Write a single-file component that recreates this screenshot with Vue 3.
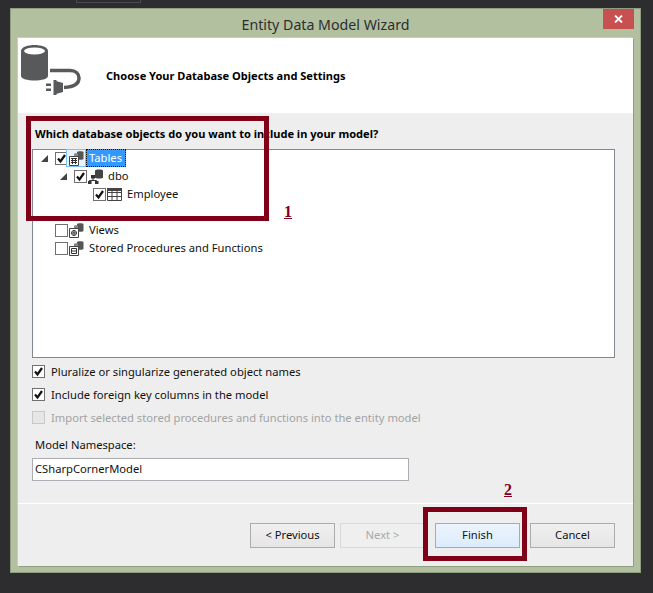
<script setup>
const nodes = [
  { label: 'Tables', level: 0, arrow: true, checked: true, icon: 'tables', selected: true },
  { label: 'dbo', level: 1, arrow: true, checked: true, icon: 'schema' },
  { label: 'Employee', level: 2, checked: true, icon: 'table' },
  { spacer: true, level: 0 },
  { label: 'Views', level: 0, checked: false, icon: 'views' },
  { label: 'Stored Procedures and Functions', level: 0, checked: false, icon: 'procs' }
]
const options = [
  { label: 'Pluralize or singularize generated object names', checked: true },
  { label: 'Include foreign key columns in the model', checked: true },
  { label: 'Import selected stored procedures and functions into the entity model', disabled: true }
]
</script>

<template>
  <div class="screen">
    <div class="chrome-tab"></div>
    <div class="window">
      <div class="titlebar">
        <span class="title">Entity Data Model Wizard</span>
        <div class="close">
          <svg width="9" height="8" viewBox="0 0 9 8"><path d="M1 0.500L8 7.500M8 0.500L1 7.500" stroke="#fff" stroke-width="1.800" fill="none"/></svg>
        </div>
      </div>
      <div class="content">
        <header class="header">
          <svg class="logo" width="62" height="52" viewBox="0 0 62 52">
            <path d="M1 6c0-4 7-6 13.500-6S28 2 28 6v25c0 3-7 4.500-13.500 4.500S1 34 1 31z" fill="#58595b"/>
            <ellipse cx="14.500" cy="6" rx="10.500" ry="3.500" fill="#fff"/>
            <path d="M30 25.500H50C56 25.500 59 29 59 33C59 39 53 42 44 42.500" fill="none" stroke="#58595b" stroke-width="3.500"/>
            <path d="M33.500 35h3v15h-3z M36 36L43 38v9L36 49z" fill="#58595b"/>
            <path d="M26 38.500h5V41h-5z M26 43.500h5V46h-5z" fill="#58595b"/>
          </svg>
          <h1 class="heading">Choose Your Database Objects and Settings</h1>
        </header>
        <main class="body">
          <p class="question">Which database objects do you want to include in your model?</p>
          <div class="tree">
            <div class="tree-rows">
              <div v-for="(n, i) in nodes" :key="i" class="tree-row" :class="'lvl' + n.level">
                <template v-if="!n.spacer">
                  <span class="arrow"><svg v-if="n.arrow" width="7" height="7" viewBox="0 0 7 7"><path d="M7 0v7H0z" fill="#444"/></svg></span>
                  <span class="check" :class="{ on: n.checked }">
                    <svg v-if="n.checked" width="11" height="11" viewBox="0 0 11 11"><path d="M2 5.500L4.500 8.500L9 2" fill="none" stroke="#111" stroke-width="2.200"/></svg>
                  </span>
                  <span class="node-icon" :class="{ picked: n.selected }">
                    <svg v-if="n.icon === 'schema'" width="16" height="15" viewBox="0 0 16 15">
                      <path d="M7 1.500c0-1.500 8-1.500 8 0v7c0 1.300-8 1.300-8 0z" fill="#444"/>
                      <path d="M3 6h4v3.500H3z" fill="#333"/>
                      <path d="M5 9v2.500M1.500 13v-1.500h7V13" fill="none" stroke="#333"/>
                      <path d="M0 12h3.500v3H0zM7 12h3.500v3H7z" fill="#333"/>
                    </svg>
                    <svg v-else-if="n.icon === 'table'" width="15" height="13" viewBox="0 0 15 13">
                      <path d="M0.500 0.500h14v12H0.500z M0.500 4.500h14M0.500 8.500h14M5 0.500v12M10 0.500v12" fill="none" stroke="#444"/>
                      <path d="M0 0h15v3H0z" fill="#444"/>
                    </svg>
                    <svg v-else width="15" height="15" viewBox="0 0 15 15">
                      <path d="M8 1c0-1 6.500-1 6.500 0v7c0 1-6.500 1-6.500 0z" fill="#555"/>
                      <path d="M5 3c0-1 4-1 4 0v3H5z" fill="#888"/>
                      <path d="M0.500 5.500h9v9h-9z" fill="#fff" stroke="#444"/>
                      <path v-if="n.icon === 'tables'" d="M2 7.500h6M2 9.500h6M2 11.500h6M3.500 7v6M6.500 7v6" stroke="#333" fill="none"/>
                      <circle v-if="n.icon === 'views'" cx="5" cy="10" r="2.500" fill="none" stroke="#333"/>
                      <path v-if="n.icon === 'views'" d="M2.500 10h5M5 7.500v5" stroke="#333" fill="none"/>
                      <path v-if="n.icon === 'procs'" d="M2.500 7.500h5v5h-5zM2.500 10h5" stroke="#333" fill="none"/>
                    </svg>
                  </span>
                  <span class="node-label" :class="{ picked: n.selected }">{{ n.label }}</span>
                </template>
              </div>
            </div>
          </div>
          <div class="options">
            <label v-for="o in options" :key="o.label" class="option" :class="{ off: o.disabled }">
              <span class="check" :class="{ on: o.checked, dim: o.disabled }">
                <svg v-if="o.checked" width="11" height="11" viewBox="0 0 11 11"><path d="M2 5.500L4.500 8.500L9 2" fill="none" stroke="#111" stroke-width="2.200"/></svg>
              </span>
              {{ o.label }}
            </label>
          </div>
          <div class="ns-label">Model Namespace:</div>
          <div class="ns-input">CSharpCornerModel</div>
        </main>
        <footer class="footer">
          <button class="btn prev">&lt; Previous</button>
          <button class="btn disabled">Next &gt;</button>
          <button class="btn primary">Finish</button>
          <button class="btn">Cancel</button>
        </footer>
      </div>
    </div>
    <div class="mark mark-one"></div>
    <span class="note note-one">1</span>
    <div class="mark mark-two"></div>
    <span class="note note-two">2</span>
  </div>
</template>

<style>
html, body { margin: 0; background: #2d2d30; }
</style>

<style scoped>
.screen {
  position: relative;
  width: 653px;
  height: 593px;
  overflow: hidden;
  background: #2d2d30;
  padding-top: 8px;
  box-sizing: border-box;
  font-family: "Noto Sans", "Open Sans", sans-serif;
  font-size: 11.200px;
  color: #111;
}
.chrome-tab {
  position: absolute;
  left: 76px;
  top: 0;
  width: 65px;
  height: 3px;
  box-sizing: border-box;
  border: 1px solid #4a4a4d;
  border-top: 0;
}
.window {
  box-sizing: border-box;
  width: 631px;
  height: 565px;
  margin-left: 10px;
  padding: 0 7px 6px;
  background: #b2c0a0;
  border: 1px solid #8f9d80;
  display: flex;
  flex-direction: column;
}
.titlebar {
  height: 29px;
  flex: none;
  display: flex;
  align-items: center;
  justify-content: center;
  position: relative;
}
.title { font-size: 14.200px; color: #2b2f30; padding-top: 1px; }
.close {
  position: absolute;
  right: -1px;
  top: 0;
  width: 31px;
  height: 20px;
  background: #c75050;
  display: flex;
  align-items: center;
  justify-content: center;
}
.content {
  flex: 1;
  display: flex;
  flex-direction: column;
  background: #eee;
  box-shadow: 1px 1px 0 #8f9d80, -1px -1px 0 #c5d0b8;
}
.header {
  height: 75px;
  flex: none;
  background: #fff;
  display: flex;
  align-items: center;
  position: relative;
}
.logo { position: absolute; left: 2px; top: 7px; }
.heading { margin: 0 0 0 88px; font-size: 11.050px; font-weight: 700; color: #000; }
.body {
  flex: 1;
  padding: 12px 18px 0 14px;
  border-bottom: 1px solid #fff;
}
.question { margin: 0 0 6px 3px; font-size: 11.050px; font-weight: 700; color: #000; line-height: 18px; height: 18px; }
.tree {
  box-sizing: border-box;
  height: 209px;
  background: #fff;
  border: 1px solid #828790;
}
.tree-rows { margin-top: -1px; }
.tree-row { height: 18px; display: flex; align-items: center; }
.lvl0 { padding-left: 8px; }
.lvl1 { padding-left: 27px; }
.lvl2 { padding-left: 46px; }
.arrow { width: 14px; height: 7px; flex: none; display: flex; }
.check {
  box-sizing: border-box;
  width: 13px;
  height: 13px;
  flex: none;
  background: #fff;
  border: 1px solid #707070;
  display: flex;
  align-items: center;
  justify-content: center;
}
.check.dim { background: #e6e6e6; border-color: #c8c8c8; }
.node-icon {
  box-sizing: border-box;
  width: 17px;
  height: 18px;
  flex: none;
  display: flex;
  align-items: center;
  justify-content: center;
}
.node-icon.picked { border: 1px solid #7dc2f0; background: #e8f4fc; margin-left: -2px; width: 20px; }
.node-label { margin-left: 1px; padding: 0 3px; line-height: 18px; }
.node-label.picked {
  margin-left: 0;
  height: 18px;
  box-sizing: border-box;
  line-height: 16px;
  color: #fff;
  background: #3399ff;
  border: 1px dotted #111;
  padding: 0 3px 0 2px;
}
.options { display: flex; flex-direction: column; gap: 5px; margin-top: 4px; }
.option { height: 18px; display: flex; align-items: center; gap: 6px; color: #111; }
.option.off { color: #a3a3a3; }
.ns-label { margin: 10px 0 0 3px; line-height: 18px; height: 18px; }
.ns-input {
  box-sizing: border-box;
  margin-top: 4px;
  width: 377px;
  height: 23px;
  line-height: 19px;
  padding-left: 2px;
  background: #fff;
  border: 1px solid #abadb3;
}
.footer {
  height: 62px;
  flex: none;
  display: flex;
  justify-content: flex-end;
  align-items: flex-start;
  gap: 10px;
  padding: 19px 18px 0 0;
  box-sizing: border-box;
}
.btn {
  box-sizing: border-box;
  width: 85px;
  height: 25px;
  font: inherit;
  color: #111;
  padding: 0 0 2px;
  border: 1px solid #acacac;
  background: linear-gradient(#f0f0f0, #e5e5e5);
}
.btn.prev { margin-right: -5px; }
.btn.disabled { color: #a8a8a8; border-color: #d9d9d9; background: #efefef; }
.btn.primary { border-color: #7eb4ea; background: linear-gradient(#ecf4fc, #dcecfc); }
.mark {
  position: absolute;
  box-sizing: border-box;
  border: 5px solid #800018;
  pointer-events: none;
}
.mark-one { left: 26px; top: 116px; width: 243px; height: 105px; }
.mark-two { left: 423px; top: 507px; width: 104px; height: 54px; }
.note {
  position: absolute;
  font-family: "Liberation Serif", serif;
  font-weight: 700;
  font-size: 16px;
  line-height: 18px;
  color: #800020;
  text-decoration: underline;
}
.note-one { left: 284px; top: 203px; }
.note-two { left: 504px; top: 481px; }
</style>
